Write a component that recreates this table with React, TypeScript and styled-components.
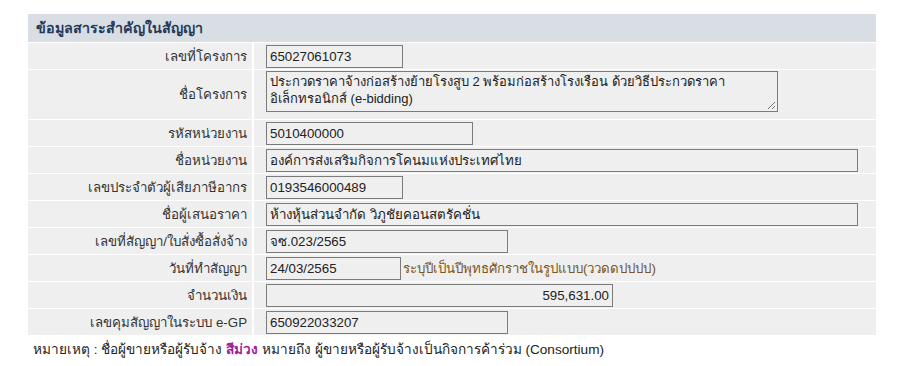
import React from "react";
import styled, { createGlobalStyle } from "styled-components";

const Global = createGlobalStyle`
  html, body { margin: 0; padding: 0; background: #ffffff; }
  body { font-family: Tahoma, "Liberation Sans", "Noto Sans", sans-serif; font-size: 13.3px; color: #333; }
`;

const Page = styled.div`
  padding: 14px 25px 0 28px;
  width: 848px;
`;

const Panel = styled.div`
  display: flex;
  flex-direction: column;
  gap: 1px;
  background: #ffffff;
`;

const Header = styled.div`
  height: 28px;
  background: #d9dee5;
  display: flex;
  align-items: center;
  padding-left: 8px;
  font-weight: bold;
  font-size: 14.3px;
  color: #243a58;
`;

const Row = styled.div`
  display: grid;
  grid-template-columns: 224px 1fr;
  column-gap: 2px;
  min-height: 26px;
`;

const Label = styled.div`
  background: #efefef;
  display: flex;
  align-items: center;
  justify-content: flex-end;
  padding-right: 5px;
  color: #333;
`;

const Value = styled.div`
  background: #efefef;
  display: flex;
  align-items: center;
  padding-left: 12px;
  gap: 2px;
`;

const Field = styled.div<{ $w: number; $right?: boolean }>`
  box-sizing: border-box;
  width: ${(p) => p.$w}px;
  height: 23px;
  border: 1px solid #7b7b7b;
  background: #efefef;
  display: flex;
  align-items: center;
  justify-content: ${(p) => (p.$right ? "flex-end" : "flex-start")};
  padding: 0 3px;
  color: #222;
  white-space: nowrap;
`;

const AreaCell = styled(Value)`
  align-items: flex-start;
  padding-top: 1px;
  padding-bottom: 7px;
`;

const Area = styled.div`
  position: relative;
  box-sizing: border-box;
  width: 512px;
  height: 41px;
  border: 1px solid #7b7b7b;
  background: #efefef;
  padding: 1px 3px;
  font-size: 13px;
  line-height: 17px;
  color: #222;
  white-space: nowrap;
`;

const Grip = styled.svg`
  position: absolute;
  right: 1px;
  bottom: 1px;
`;

const Hint = styled.span`
  color: #7a5526;
  white-space: nowrap;
`;

const Note = styled.div`
  padding: 3px 0 0 5px;
  font-size: 13.6px;
  color: #222;
`;

const Purple = styled.span`
  color: #a0209a;
  font-weight: bold;
`;

const rows: { label: string; value: string; w: number }[] = [
  { label: "รหัสหน่วยงาน", value: "5010400000", w: 207 },
  { label: "ชื่อหน่วยงาน", value: "องค์การส่งเสริมกิจการโคนมแห่งประเทศไทย", w: 592 },
  { label: "เลขประจำตัวผู้เสียภาษีอากร", value: "0193546000489", w: 137 },
  { label: "ชื่อผู้เสนอราคา", value: "ห้างหุ้นส่วนจำกัด วิภูชัยคอนสตรัคชั่น", w: 592 },
  { label: "เลขที่สัญญา/ใบสั่งซื้อสั่งจ้าง", value: "จซ.023/2565", w: 242 },
];

export default function App() {
  return (
    <>
      <Global />
      <Page>
        <Panel>
          <Header>ข้อมูลสาระสำคัญในสัญญา</Header>
          <Row>
            <Label>เลขที่โครงการ</Label>
            <Value>
              <Field $w={137}>65027061073</Field>
            </Value>
          </Row>
          <Row>
            <Label>ชื่อโครงการ</Label>
            <AreaCell>
              <Area>
                ประกวดราคาจ้างก่อสร้างย้ายโรงสูบ 2 พร้อมก่อสร้างโรงเรือน ด้วยวิธีประกวดราคา
                <br />
                อิเล็กทรอนิกส์ (e-bidding)
                <Grip width="10" height="10" viewBox="0 0 10 10">
                  <path d="M9 2 L2 9 M9 6 L6 9" stroke="#777" strokeWidth="1" />
                </Grip>
              </Area>
            </AreaCell>
          </Row>
          {rows.map((r) => (
            <Row key={r.label}>
              <Label>{r.label}</Label>
              <Value>
                <Field $w={r.w}>{r.value}</Field>
              </Value>
            </Row>
          ))}
          <Row>
            <Label>วันที่ทำสัญญา</Label>
            <Value>
              <Field $w={135}>24/03/2565</Field>
              <Hint>ระบุปีเป็นปีพุทธศักราชในรูปแบบ(ววดดปปปป)</Hint>
            </Value>
          </Row>
          <Row>
            <Label>จำนวนเงิน</Label>
            <Value>
              <Field $w={347} $right>
                595,631.00
              </Field>
            </Value>
          </Row>
          <Row>
            <Label>เลขคุมสัญญาในระบบ e-GP</Label>
            <Value>
              <Field $w={242}>650922033207</Field>
            </Value>
          </Row>
        </Panel>
        <Note>
          หมายเหตุ : ชื่อผู้ขายหรือผู้รับจ้าง <Purple>สีม่วง</Purple> หมายถึง ผู้ขายหรือผู้รับจ้างเป็นกิจการค้าร่วม (Consortium)
        </Note>
      </Page>
    </>
  );
}
